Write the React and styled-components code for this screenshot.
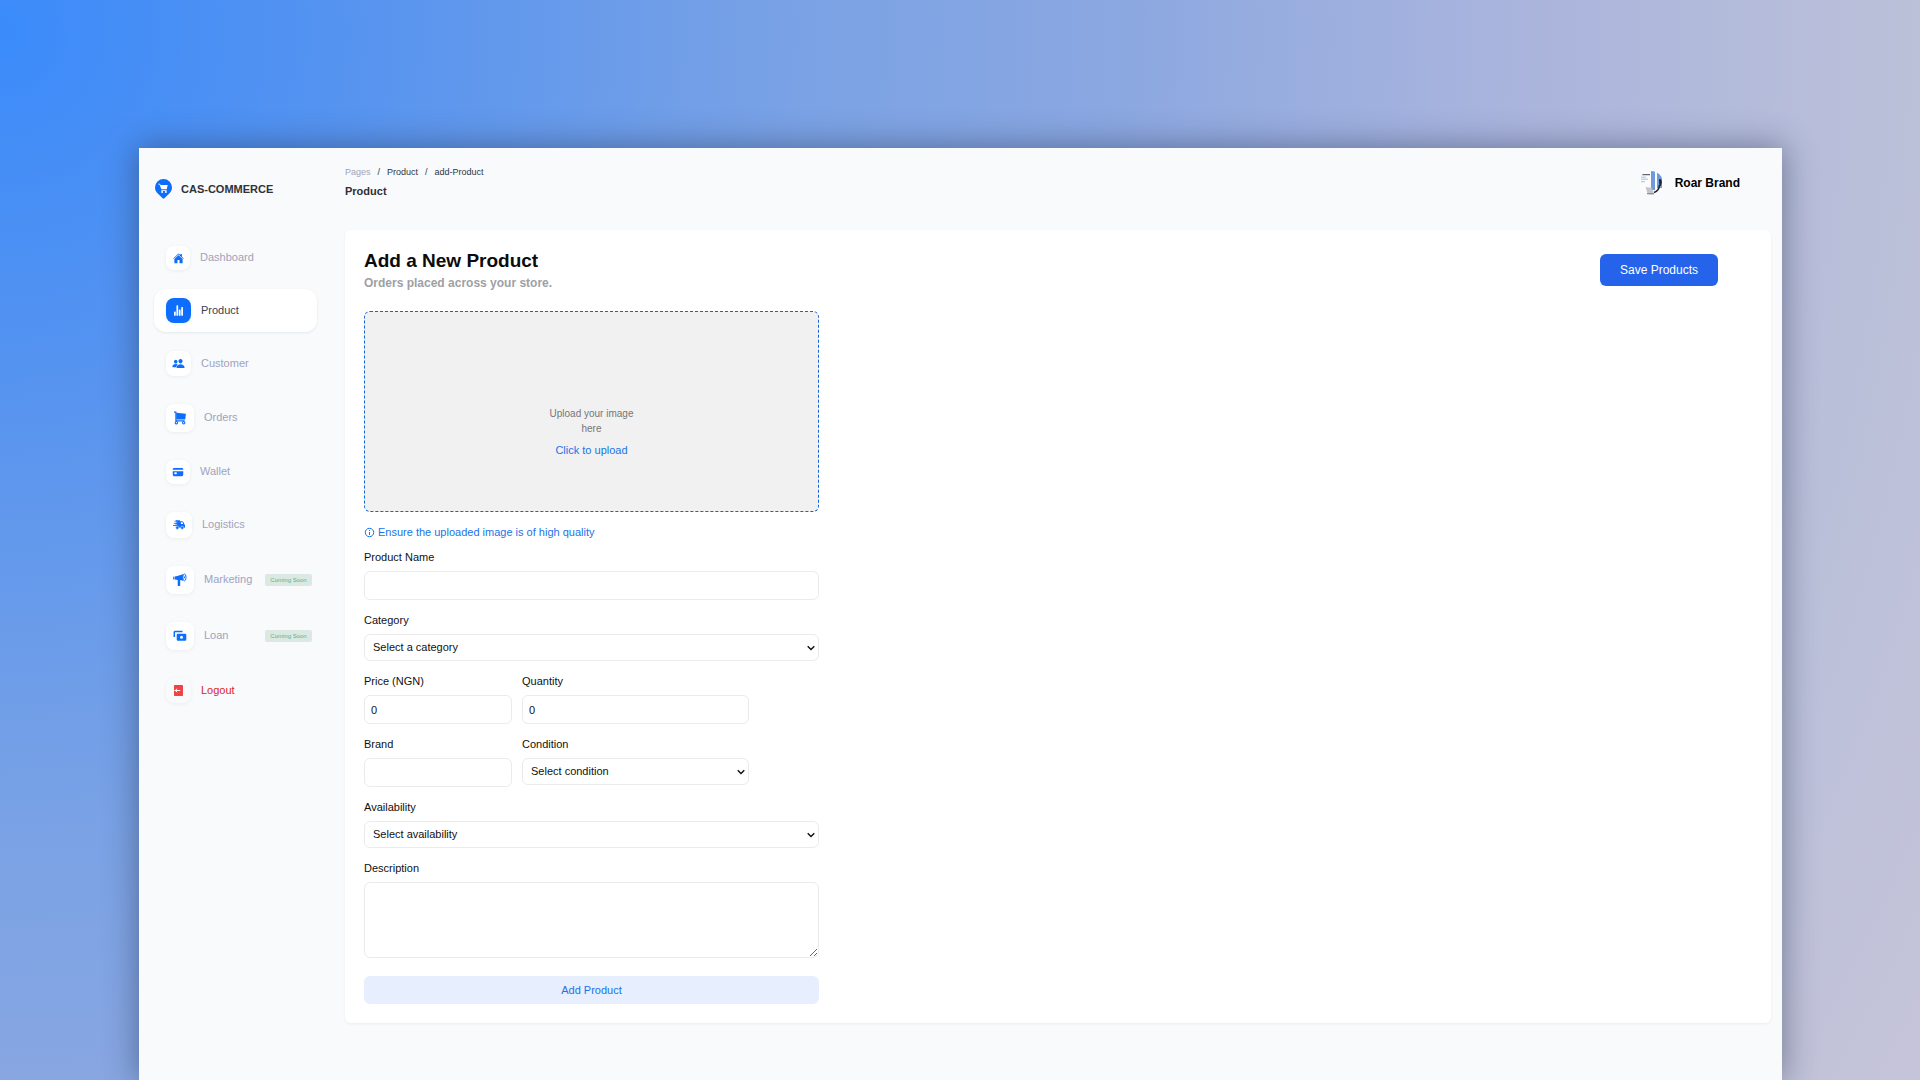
import React from "react";
import styled, { createGlobalStyle } from "styled-components";
import { IoHome, IoStatsChart, IoPeople, IoCard } from "react-icons/io5";

const GlobalStyle = createGlobalStyle`
  *, *::before, *::after { box-sizing: border-box; }
  body {
    margin: 0;
    font-family: "Liberation Sans", Arial, Helvetica, sans-serif;
    font-size: 11px;
    line-height: 16px;
    color: #111;
  }
  h1, h2, p, ul { margin: 0; padding: 0; }
  button, input, select, textarea { font: inherit; color: inherit; }
`;

const Backdrop = styled.div`
  min-height: 100vh;
  display: flex;
  padding: 148px 138px 0 139px;
  background: radial-gradient(circle at 0 3%, #3b8bfb 0, #5292f1 300px, #7aa2e5 800px, #8aa7e1 1100px, #a9b4dd 1500px, #bbc0d9 1900px, #c6c4da 2200px);
`;

const Window = styled.div`
  flex: 1;
  display: flex;
  background: #f8fafc;
  box-shadow: 0 0 30px 2px rgba(40, 50, 80, 0.48);
`;

const Sidebar = styled.aside`
  width: 206px;
  flex-shrink: 0;
  padding: 0 28px 0 15px;
`;

const Brand = styled.a`
  display: flex;
  align-items: center;
  gap: 9px;
  height: 82px;
  margin-bottom: 7px;
  color: #2f3237;
  font-weight: 700;
  text-decoration: none;
`;

const NavList = styled.ul`
  display: flex;
  flex-direction: column;
  gap: 10px;
  list-style: none;
`;

const NavLink = styled.a`
  display: flex;
  align-items: center;
  gap: 10px;
  padding: 9px 5px 9px 12px;
  border-radius: 12px;
  text-decoration: none;
  color: ${(p) => (p.$danger ? "#dc2626" : p.$active ? "#3a4152" : "#a0a3bd")};
  background: ${(p) => (p.$active ? "#fff" : "transparent")};
  box-shadow: ${(p) => (p.$active ? "0 1px 3px rgba(15, 23, 42, 0.08)" : "none")};
`;

const NavLabel = styled.span`
  padding-bottom: 2px;
`;

const IconTile = styled.span`
  width: ${(p) => p.$size}px;
  height: ${(p) => p.$size}px;
  flex-shrink: 0;
  display: grid;
  place-items: center;
  border-radius: 8px;
  color: ${(p) => (p.$danger ? "#ef4444" : p.$active ? "#fff" : "#0d6efd")};
  background: ${(p) => (p.$danger ? "#f8fafc" : p.$active ? "#0d6efd" : "#fff")};
  box-shadow: 0 1px 4px rgba(15, 23, 42, 0.06);
`;

const Soon = styled.span`
  margin-left: auto;
  width: 47px;
  border-radius: 2px;
  background: #dce8e2;
  color: #57b583;
  font-size: 6px;
  line-height: 12px;
  text-align: center;
`;

const Main = styled.main`
  flex: 1;
  min-width: 0;
  padding-right: 11px;
`;

const Header = styled.header`
  display: flex;
  justify-content: space-between;
  align-items: flex-start;
  height: 82px;
  padding: 16px 31px 0 0;
`;

const Crumbs = styled.nav`
  display: flex;
  gap: 7px;
  font-size: 9px;
  color: #2d3748;
  a { color: inherit; text-decoration: none; }
  a:first-child { color: #a0a3bd; }
`;

const PageName = styled.h2`
  margin-top: 3px;
  font-size: 11px;
  color: #2d3036;
`;

const Account = styled.div`
  display: flex;
  align-items: center;
  gap: 12px;
  padding-top: 7px;
  font-size: 12px;
  font-weight: 700;
  color: #000;
`;

const Card = styled.section`
  padding: 19px;
  border-radius: 6px;
  background: #fff;
  box-shadow: 0 1px 3px rgba(15, 23, 42, 0.06);
`;

const CardHead = styled.div`
  display: flex;
  justify-content: space-between;
  align-items: flex-start;
  padding-right: 34px;
  margin-bottom: 20px;
`;

const Title = styled.h1`
  font-size: 19px;
  line-height: 24px;
  color: #0b0b0b;
`;

const Subtitle = styled.p`
  margin-top: 2px;
  font-size: 12px;
  font-weight: 700;
  color: #9ea0a4;
`;

const SaveButton = styled.button`
  width: 118px;
  height: 32px;
  margin-top: 5px;
  padding: 0;
  border: 0;
  border-radius: 6px;
  background: #2563eb;
  color: #fff;
  font-size: 12px;
`;

const Form = styled.form`
  display: flex;
  flex-direction: column;
  gap: 12px;
  width: 455px;
`;

const Dropzone = styled.div`
  display: flex;
  flex-direction: column;
  align-items: center;
  gap: 6px;
  height: 201px;
  padding-top: 94px;
  border: 1px dashed #0f66d8;
  border-radius: 6px;
  background: #f1f1f1;
`;

const DropHint = styled.p`
  width: 90px;
  text-align: center;
  font-size: 10px;
  line-height: 15px;
  color: #767676;
`;

const UploadButton = styled.button`
  padding: 0;
  border: 0;
  background: none;
  color: #1a73e8;
`;

const Note = styled.p`
  display: flex;
  align-items: center;
  gap: 3px;
  margin-bottom: -3px;
  color: #1a73e8;
`;

const Field = styled.div`
  display: flex;
  flex-direction: column;
  gap: 6px;
`;

const Pair = styled.div`
  display: grid;
  grid-template-columns: 148px 227px;
  align-items: start;
  gap: 10px;
`;

const Input = styled.input`
  width: 100%;
  height: 29px;
  padding: 0 6px;
  border: 1px solid #ebebed;
  border-radius: 6px;
  background: #fff;
`;

const Select = styled.select`
  width: 100%;
  height: 27px;
  padding: 0 20px 1px 8px;
  appearance: none;
  border: 1px solid #ebebed;
  border-radius: 6px;
  background: #fff url("data:image/svg+xml,%3Csvg xmlns='http://www.w3.org/2000/svg' width='8' height='6'%3E%3Cpath d='M.7 1.200L4 4.500L7.300 1.200' fill='none' stroke='%23111' stroke-width='1.400'/%3E%3C/svg%3E") no-repeat right 3px center;
`;

const TextArea = styled.textarea`
  display: block;
  width: 100%;
  height: 76px;
  padding: 6px;
  border: 1px solid #ebebed;
  border-radius: 6px;
  background: #fff;
  resize: vertical;
`;

const AddButton = styled.button`
  height: 28px;
  margin-top: 6px;
  border: 0;
  border-radius: 6px;
  background: #e7eefe;
  color: #1a73e8;
`;

const PinLogo = () => (
  <svg width="18" height="20" viewBox="0 0 18 20" aria-hidden="true">
    <path d="M9.500 0A8.500 8.500 0 0 1 18 8.500c0 2.400-1 4.200-2.500 5.700L10.400 19.300q-.9.900-1.800 0L3.500 14.200C2 12.700 1 10.900 1 8.500A8.500 8.500 0 0 1 9.500 0z" fill="#0d6efd" />
    <path d="M4.300 4.700h1.700l.5 1.300h7.200l-1 4.200H7.400L5.500 5.500H4.300zM7.300 10.900h5.400v.8H7.300z" fill="#fff" />
    <circle cx="8.100" cy="13" r="1" fill="#fff" />
    <circle cx="11.900" cy="13" r="1" fill="#fff" />
  </svg>
);

const CartIcon = () => (
  <svg width="12" height="14" viewBox="0 0 12 14" fill="none" stroke="currentColor" aria-hidden="true">
    <path d="M0 1.100H1.900V9.900H10.600" strokeWidth="1.200" />
    <path d="M2.200 1.800L11.900 2.700L11.300 8.600H2.200z" fill="currentColor" stroke="none" />
    <circle cx="2.400" cy="11.700" r="1.200" strokeWidth="1.100" />
    <circle cx="9.700" cy="11.700" r="1.200" strokeWidth="1.100" />
  </svg>
);

const FastTruckIcon = () => (
  <svg width="12" height="10" viewBox="0 0 12 10" aria-hidden="true">
    <path d="M3 .3H6.900V1.300H8.800C10.400 1.300 11 2.800 11.300 4.200C11.800 4.500 12 5 12 5.600V7.700H2.600L3.400 5.500H2.200z" fill="currentColor" />
    <path d="M1.600 1.100H4M.8 3.300H3.600M0 5.500H3.200" stroke="currentColor" strokeWidth="0.900" />
    <path d="M1.800 2.200H4.400M1.200 4.400H4" stroke="#fff" strokeWidth="0.600" />
    <path d="M7.900 2.300H8.900C9.700 2.300 10 3 10.200 3.900H7.900z" fill="#fff" />
    <circle cx="4.300" cy="7.800" r="1.600" fill="currentColor" stroke="#fff" strokeWidth="0.500" />
    <circle cx="9.200" cy="7.800" r="1.600" fill="currentColor" stroke="#fff" strokeWidth="0.500" />
  </svg>
);

const MegaphoneIcon = () => (
  <svg width="14" height="14" viewBox="0 0 14 14" aria-hidden="true">
    <path d="M1.900 3.400L4.200 3L10 1.200V7.800L7.200 7V12.300Q7.200 13 6.500 13H5.400Q4.700 13 4.700 12.300V7L1.900 6.600z" fill="currentColor" />
    <path d="M1.200 3.600Q.2 5 1.200 6.500" fill="none" stroke="currentColor" strokeWidth="1.200" />
    <ellipse cx="11.400" cy="4.400" rx="1.600" ry="3.400" fill="#fff" stroke="currentColor" strokeWidth="1" />
    <path d="M11 3.200a1 1.100 0 0 1 0 2.200z" fill="currentColor" />
  </svg>
);

const BanknotesIcon = () => (
  <svg width="14" height="14" viewBox="0 0 14 14" aria-hidden="true">
    <path d="M1.300 8V3.200A.7.700 0 0 1 2 2.500H9.500" fill="none" stroke="currentColor" strokeWidth="1.500" />
    <rect x="3.700" y="4.700" width="9.600" height="7" rx="1.200" fill="currentColor" />
    <circle cx="8.500" cy="8.200" r="1.500" fill="#fff" />
  </svg>
);

const LogoutIcon = () => (
  <svg width="11" height="11" viewBox="0 0 11 11" aria-hidden="true">
    <rect x="1" y="0" width="9" height="11" rx="0.800" fill="currentColor" />
    <path d="M1.400 5.500H7.200M4.200 3.800L2.200 5.500L4.200 7.200" fill="none" stroke="#fff" strokeWidth="1" />
  </svg>
);

const InfoIcon = () => (
  <svg width="11" height="11" viewBox="0 0 11 11" fill="none" stroke="currentColor" aria-hidden="true">
    <circle cx="5.500" cy="5.500" r="4.200" />
    <path d="M5.500 5V8M5.500 3V4" />
  </svg>
);

const Avatar = () => (
  <svg width="24" height="24" viewBox="0 0 24 24" role="img" aria-label="Roar Brand">
    <defs>
      <clipPath id="avatar-circle"><circle cx="12" cy="12" r="12" /></clipPath>
    </defs>
    <g clipPath="url(#avatar-circle)">
      <rect width="24" height="24" fill="#fcfcfd" />
      <path d="M1 3.700H11" stroke="#3b4252" strokeWidth="1" />
      <path d="M2 6.200h5M2 8.200h7M2 10.700h4" stroke="#a3bdea" strokeWidth="1" />
      <rect x="12" y="0" width="4" height="19" fill="#6f9ade" />
      <path d="M18 1h3l2 6v10h-5z" fill="#6f9ade" />
      <path d="M20.500 8.500c2-1 2.500 4 .5 6.500z" fill="#20252f" stroke="#20252f" />
      <path d="M20.500 14c-.2 4-2.500 6.500-5.500 7.500" fill="none" stroke="#20252f" strokeWidth="1.600" />
      <path d="M6.500 16l6 .8 2.500 5.700H8.500z" fill="#c3c6cc" />
      <path d="M8 22h7v1.500H8z" fill="#8d929b" />
    </g>
  </svg>
);

const NAV = [
  { label: "Dashboard", Icon: IoHome, tile: 24, icon: 11 },
  { label: "Product", Icon: IoStatsChart, tile: 25, icon: 11, active: true },
  { label: "Customer", Icon: IoPeople, tile: 25, icon: 13 },
  { label: "Orders", Icon: CartIcon, tile: 28 },
  { label: "Wallet", Icon: IoCard, tile: 24, icon: 12 },
  { label: "Logistics", Icon: FastTruckIcon, tile: 26 },
  { label: "Marketing", Icon: MegaphoneIcon, tile: 28, soon: true },
  { label: "Loan", Icon: BanknotesIcon, tile: 28, soon: true },
  { label: "Logout", Icon: LogoutIcon, tile: 25, danger: true },
];

export default function App() {
  return (
    <>
      <GlobalStyle />
      <Backdrop>
        <Window>
          <Sidebar>
            <Brand href="#home">
              <PinLogo />
              CAS-COMMERCE
            </Brand>
            <nav aria-label="Main">
              <NavList>
                {NAV.map(({ label, Icon, tile, icon, active, soon, danger }) => (
                  <li key={label}>
                    <NavLink href={`#${label.toLowerCase()}`} $active={active} $danger={danger}>
                      <IconTile $size={tile} $active={active} $danger={danger}>
                        <Icon size={icon} />
                      </IconTile>
                      <NavLabel>{label}</NavLabel>
                      {soon && <Soon>Coming Soon</Soon>}
                    </NavLink>
                  </li>
                ))}
              </NavList>
            </nav>
          </Sidebar>
          <Main>
            <Header>
              <div>
                <Crumbs aria-label="Breadcrumb">
                  <a href="#pages">Pages</a>
                  <span>/</span>
                  <a href="#product">Product</a>
                  <span>/</span>
                  <a href="#add-product">add-Product</a>
                </Crumbs>
                <PageName>Product</PageName>
              </div>
              <Account>
                <Avatar />
                Roar Brand
              </Account>
            </Header>
            <Card>
              <CardHead>
                <div>
                  <Title>Add a New Product</Title>
                  <Subtitle>Orders placed across your store.</Subtitle>
                </div>
                <SaveButton type="button">Save Products</SaveButton>
              </CardHead>
              <Form>
                <Dropzone>
                  <DropHint>Upload your image here</DropHint>
                  <UploadButton type="button">Click to upload</UploadButton>
                </Dropzone>
                <Note>
                  <InfoIcon />
                  Ensure the uploaded image is of high quality
                </Note>
                <Field>
                  <label htmlFor="name">Product Name</label>
                  <Input id="name" type="text" />
                </Field>
                <Field>
                  <label htmlFor="category">Category</label>
                  <Select id="category">
                    <option>Select a category</option>
                  </Select>
                </Field>
                <Pair>
                  <Field>
                    <label htmlFor="price">Price (NGN)</label>
                    <Input id="price" type="number" defaultValue="0" />
                  </Field>
                  <Field>
                    <label htmlFor="quantity">Quantity</label>
                    <Input id="quantity" type="number" defaultValue="0" />
                  </Field>
                </Pair>
                <Pair>
                  <Field>
                    <label htmlFor="brand">Brand</label>
                    <Input id="brand" type="text" />
                  </Field>
                  <Field>
                    <label htmlFor="condition">Condition</label>
                    <Select id="condition">
                      <option>Select condition</option>
                    </Select>
                  </Field>
                </Pair>
                <Field>
                  <label htmlFor="availability">Availability</label>
                  <Select id="availability">
                    <option>Select availability</option>
                  </Select>
                </Field>
                <Field>
                  <label htmlFor="description">Description</label>
                  <TextArea id="description" />
                </Field>
                <AddButton type="button">Add Product</AddButton>
              </Form>
            </Card>
          </Main>
        </Window>
      </Backdrop>
    </>
  );
}
